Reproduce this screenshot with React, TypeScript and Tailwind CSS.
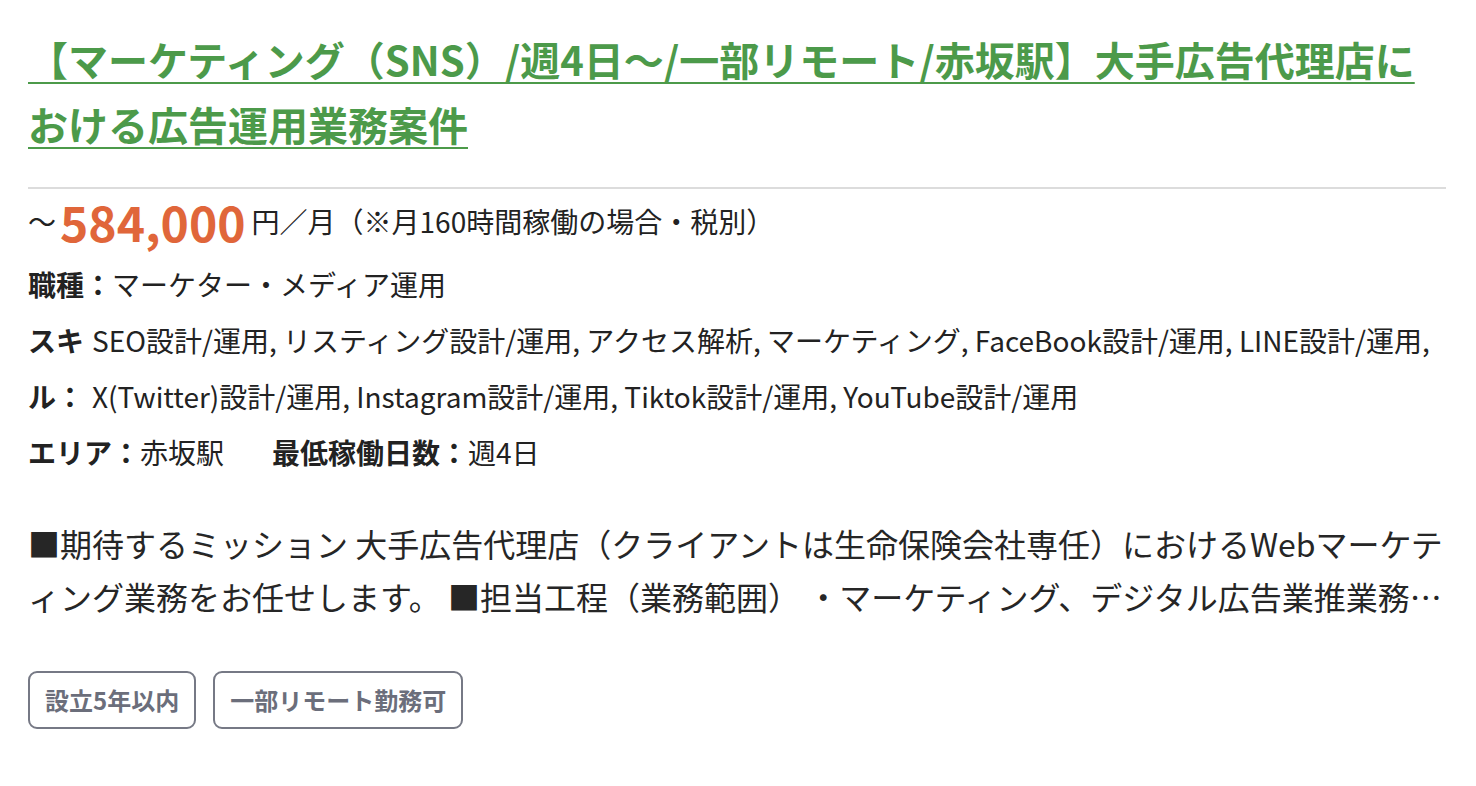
import React from 'react';

const font = { fontFamily: '"Noto Sans CJK JP", "Noto Sans", sans-serif' };

const skills = 'SEO設計/運用, リスティング設計/運用, アクセス解析, マーケティング, FaceBook設計/運用, LINE設計/運用, X(Twitter)設計/運用, Instagram設計/運用, Tiktok設計/運用, YouTube設計/運用';

const tags = ['設立5年以内', '一部リモート勤務可'];

export default function App() {
    return (
        <div className="min-h-screen bg-white pl-[28px] pr-[30px] pt-[27px] text-[#222]" style={font}>
            {/* 案件タイトル */}
            <h2 className="text-[40px] font-bold leading-[65px] text-[#4c9a4a] underline decoration-2 underline-offset-[6px]">
                【マーケティング（SNS）/週4日〜/一部リモート/赤坂駅】大手広告代理店における広告運用業務案件
            </h2>

            <div className="mt-[30px] h-[2px] bg-[#dcdcdc]" />

            {/* 単価 */}
            <div className="flex h-[64px] items-center">
                <span className="text-[28px]">〜</span>
                <span className="ml-[4px] text-[48px] font-bold text-[#e0663a]">584,000</span>
                <span className="ml-[6px] text-[28px]">円／月（※月160時間稼働の場合・税別）</span>
            </div>

            <div className="mt-[3px] text-[28px] leading-[56px]">
                <p>
                    <span className="font-bold">職種：</span>マーケター・メディア運用
                </p>
                <div className="flex">
                    <span className="w-[60px] shrink-0 font-bold">スキル：</span>
                    <span className="pl-[4px]">{skills}</span>
                </div>
                <p className="flex">
                    <span>
                        <span className="font-bold">エリア：</span>赤坂駅
                    </span>
                    <span className="ml-[48px]">
                        <span className="font-bold">最低稼働日数：</span>週4日
                    </span>
                </p>
            </div>

            {/* 概要 */}
            <p className="mt-[37px] line-clamp-2 text-[32px] leading-[53px] text-[#262626]">
                ■期待するミッション 大手広告代理店（クライアントは生命保険会社専任）におけるWebマーケティング業務をお任せします。 ■担当工程（業務範囲） ・マーケティング、デジタル広告業推業務の推進およびクライアントとの折衝、レポーティング業務
            </p>

            <div className="mt-[48px] flex gap-[17px]">
                {tags.map((t) => (
                    <span
                        key={t}
                        className="flex h-[58px] items-center rounded-[9px] border-2 border-[#767985] px-[15px] text-[24px] font-bold text-[#6b6e7b]"
                    >
                        {t}
                    </span>
                ))}
            </div>
        </div>
    );
}
